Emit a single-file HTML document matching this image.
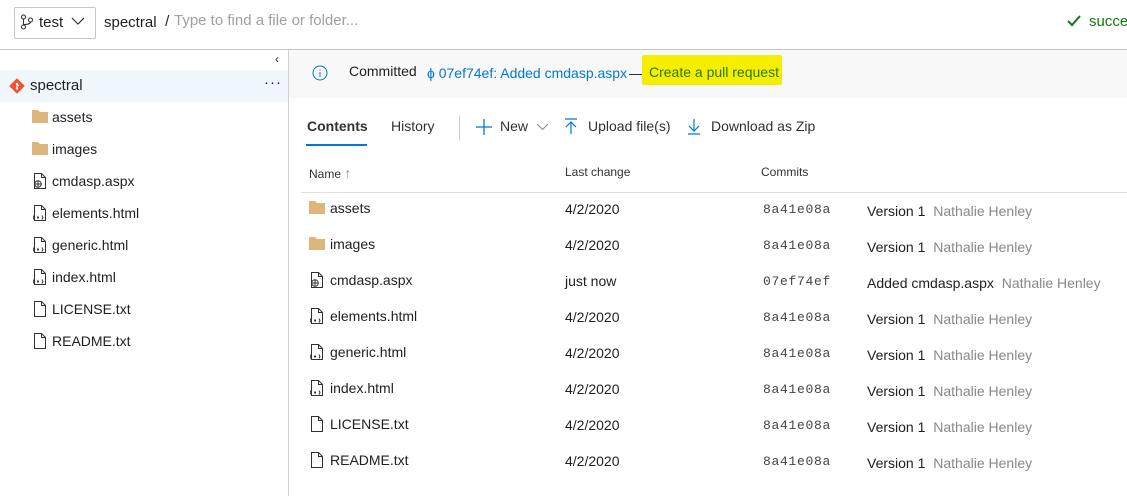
<!DOCTYPE html>
<html><head><meta charset="utf-8"><style>
*{margin:0;padding:0;box-sizing:border-box}
body{width:1127px;height:496px;overflow:hidden;background:#fff;font-family:"Liberation Sans",sans-serif;font-size:14px;color:#201f1e;position:relative}
.a{position:absolute;white-space:nowrap}
.g{color:#8a8886}
.m{font-family:"Liberation Mono",monospace;font-size:13px;color:#444;letter-spacing:0.7px}
</style></head><body>
<div class="a" style="left:14px;top:7px;width:82px;height:32px;border:1px solid #c8c6c4;border-radius:2px"></div>
<svg class="a" style="left:20px;top:14px" width="14" height="16" viewBox="0 0 14 16" fill="none" stroke="#323130" stroke-width="1.1"><circle cx="3.5" cy="3" r="2"/><circle cx="3.5" cy="13" r="2"/><circle cx="10.5" cy="6" r="2"/><path d="M3.5 5v6M10.5 8c0 3-7 2-7 3"/></svg>
<div class="a" style="left:39px;top:14px;font-size:15px">test</div>
<svg class="a" style="left:71px;top:17px" width="14" height="9" viewBox="0 0 14 9" fill="none" stroke="#323130" stroke-width="1.2"><path d="M1 1l6 6 6-6"/></svg>
<div class="a" style="left:104px;top:14px;font-size:15px">spectral</div>
<div class="a" style="left:161px;top:13px;font-size:15px">&nbsp;/</div>
<div class="a" style="left:174px;top:12px;font-size:15px;color:#a19f9d">Type to find a file or folder...</div>
<svg class="a" style="left:1066px;top:14px" width="16" height="14" viewBox="0 0 16 14" fill="none" stroke="#107c10" stroke-width="2"><path d="M2 7l4 4 8-9"/></svg>
<div class="a" style="left:1089px;top:13px;font-size:15px;color:#107c10">succeeded</div>
<div class="a" style="left:0;top:49px;width:1127px;height:1px;background:#c8c6c4"></div>
<div class="a" style="left:288px;top:50px;width:1px;height:446px;background:#d0d0d0"></div>
<div class="a" style="left:275px;top:52px;font-size:12px">&#8249;</div>
<div class="a" style="left:0;top:70px;width:288px;height:32px;background:#eff6fc"></div>
<svg class="a" style="left:9px;top:78px" width="16" height="16" viewBox="0 0 16 16"><rect x="2.5" y="2.5" width="11" height="11" transform="rotate(45 8 8)" fill="#f05133"/><circle cx="8" cy="6" r="1.2" fill="#fff"/><circle cx="8" cy="10.5" r="1.2" fill="#fff"/><path d="M8 6v4.5M8 6l2 2" stroke="#fff"/></svg>
<div class="a" style="left:30px;top:77px;font-size:15px">spectral</div>
<div class="a" style="left:264px;top:74px;font-size:15px;letter-spacing:1px">&#183;&#183;&#183;</div>
<div id="side"></div>
<div class="a" style="left:289px;top:50px;width:838px;height:48px;background:#f8f8f8"></div>
<svg class="a" style="left:312px;top:65px" width="16" height="16" viewBox="0 0 16 16" fill="none" stroke="#0078d4"><circle cx="8" cy="8" r="7"/><path d="M8 7v5M8 4.5v1"/></svg>
<div class="a" style="left:349px;top:63px">Committed</div>
<div class="a" style="left:427px;top:65px;color:#0078d4">&#981; 07ef74ef: Added cmdasp.aspx</div>
<div class="a" style="left:629px;top:65px">—</div>
<div class="a" style="left:642px;top:55px;width:140px;height:30px;background:#f5ee00;border-radius:2px"></div>
<div class="a" style="left:649px;top:64px;color:#2a7a00">Create a pull request</div>
<div class="a" style="left:307px;top:118px;font-weight:bold;font-size:14px;color:#323130">Contents</div>
<div class="a" style="left:306px;top:144px;width:61px;height:2px;background:#0078d4"></div>
<div class="a" style="left:391px;top:118px;color:#323130">History</div>
<div class="a" style="left:459px;top:116px;width:1px;height:24px;background:#c8c6c4"></div>
<svg class="a" style="left:475px;top:118px" width="18" height="18" viewBox="0 0 18 18" stroke="#0078d4" stroke-width="1.3"><path d="M9 1v16M1 9h16"/></svg>
<div class="a" style="left:500px;top:118px;color:#323130">New</div>
<svg class="a" style="left:536px;top:123px" width="13" height="8" viewBox="0 0 13 8" fill="none" stroke="#8a8886"><path d="M1 1l5.5 5.5L12 1"/></svg>
<svg class="a" style="left:564px;top:118px" width="14" height="17" viewBox="0 0 14 17" fill="none" stroke="#0078d4" stroke-width="1.2"><path d="M1 1h12M7 16V4M2 9l5-5 5 5"/></svg>
<div class="a" style="left:588px;top:118px;color:#323130">Upload file(s)</div>
<svg class="a" style="left:687px;top:118px" width="14" height="17" viewBox="0 0 14 17" fill="none" stroke="#0078d4" stroke-width="1.2"><path d="M1 16h12M7 1v12M2 8l5 5 5-5"/></svg>
<div class="a" style="left:711px;top:118px;color:#323130">Download as Zip</div>
<div class="a" style="left:309px;top:165px;font-size:12px;color:#323130">Name <span style="color:#8a8886;font-size:14px">&#8593;</span></div>
<div class="a" style="left:565px;top:165px;font-size:12px;color:#323130">Last change</div>
<div class="a" style="left:761px;top:165px;font-size:12px;color:#323130">Commits</div>
<div class="a" style="left:301px;top:192px;width:826px;height:1px;background:#e1dfdd"></div>
<div id="rows"></div>
<script>
var files=[["assets","f"],["images","f"],["cmdasp.aspx","w"],["elements.html","h"],["generic.html","h"],["index.html","h"],["LICENSE.txt","t"],["README.txt","t"]];
function icon(t,x,y){
 if(t=="f")return '<svg class="a" style="left:'+x+'px;top:'+(y+1)+'px" width="16" height="13" viewBox="0 0 16 13"><path d="M0 0h6l2 2h8v11H0z" fill="#dcb67a"/></svg>';
 var s='<svg class="a" style="left:'+(x+1)+'px;top:'+y+'px" width="14" height="16" viewBox="0 0 14 16" fill="none" stroke="#323130"><path d="M1.5 .5h7l4 4v11h-11z M8.5 .5v4h4"/>';
 if(t=="w")s+='<circle cx="5" cy="11" r="3.3" fill="#fff"/><path d="M1.7 11h6.6M5 7.7v6.6"/>';
 if(t=="h")s+='<path d="M1 10.5l-1 2 1 2M9 10.5l1 2-1 2" /><circle cx="5" cy="12.5" r="0.6" fill="#323130"/>';
 return s+'</svg>';
}
var h='';
files.forEach(function(f,i){var y=109+i*32;h+=icon(f[1],32,y)+'<div class="a" style="left:52px;top:'+y+'px;font-size:14px">'+f[0]+'</div>';});
document.getElementById('side').outerHTML=h;
h='';
files.forEach(function(f,i){var y=200+i*36;var j=i==2;
h+=icon(f[1],309,y)+'<div class="a" style="left:330px;top:'+y+'px">'+f[0]+'</div>';
h+='<div class="a" style="left:565px;top:'+(y+1)+'px">'+(j?'just now':'4/2/2020')+'</div>';
h+='<div class="a m" style="left:763px;top:'+(y+2)+'px">'+(j?'07ef74ef':'8a41e08a')+'</div>';
h+='<div class="a" style="left:867px;top:'+(y+3)+'px">'+(j?'Added cmdasp.aspx':'Version 1')+' <span class="g" style="margin-left:4px">Nathalie Henley</span></div>';});
document.getElementById('rows').outerHTML=h;
</script>
</body></html>
